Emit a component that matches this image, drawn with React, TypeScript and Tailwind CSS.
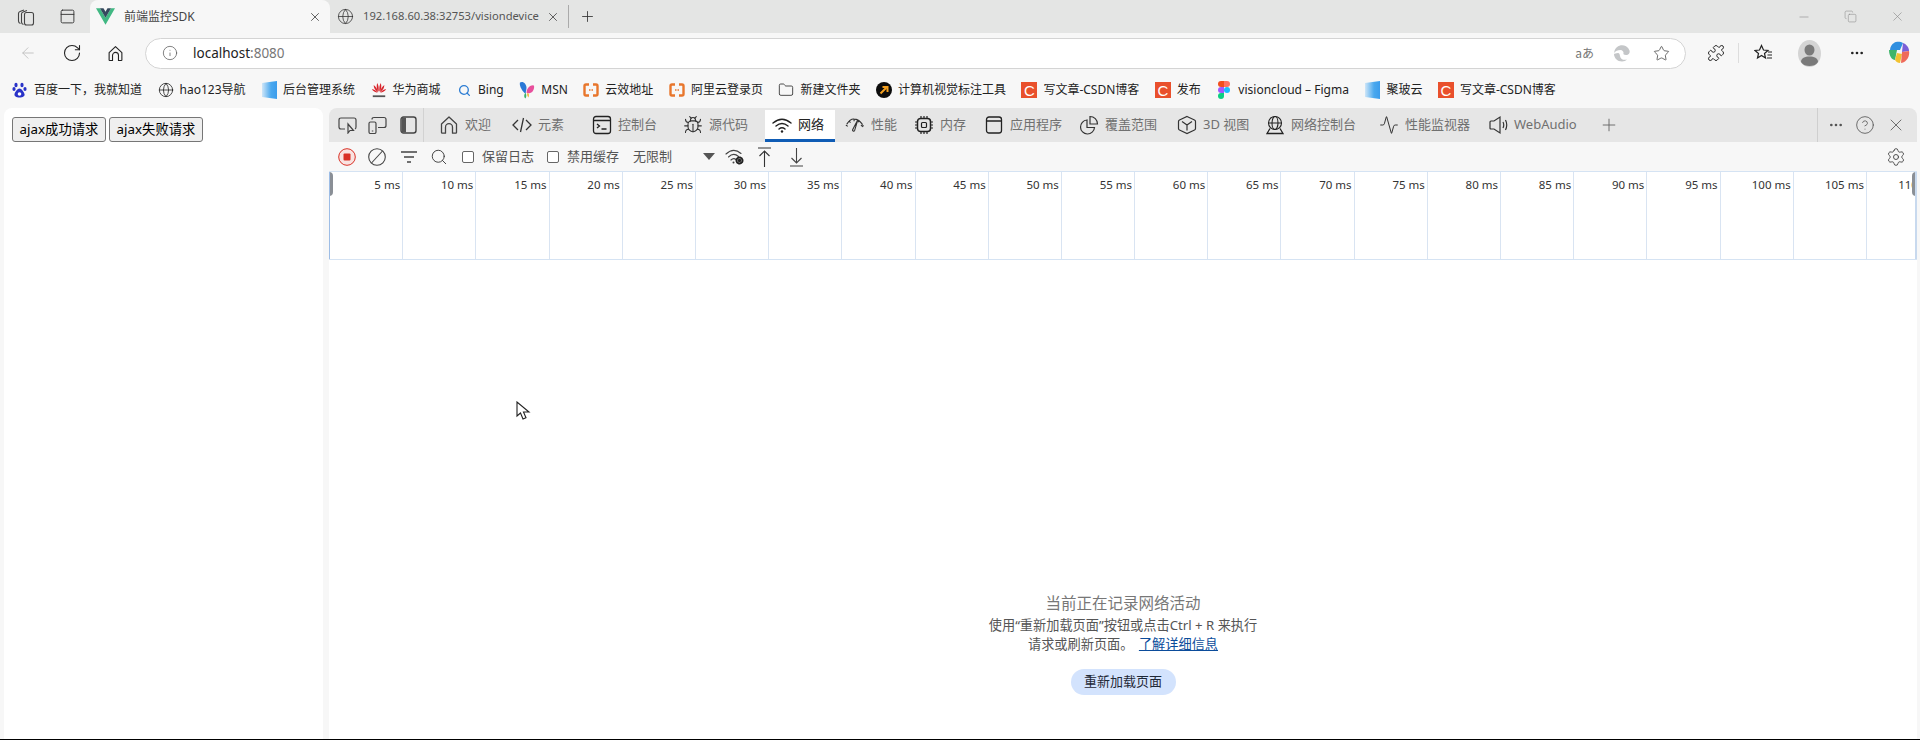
import React from "react"
import { ArrowLeft, RotateCw, Info, Star, Puzzle, X, Plus, Minus, Globe, Bug, Activity, Ellipsis, CircleHelp, Settings, Search, Folder, Copy, PanelTop } from "lucide-react"

const sans = "font-['Noto_Sans','Noto_Sans_CJK_SC',sans-serif]"

function VueLogo() {
  return (
    <svg width="19" height="17" viewBox="0 0 24 21">
      <path d="M0 0h5l7 12L19 0h5L12 21z" fill="#41b883" />
      <path d="M5 0h4.500L12 4.500 14.500 0H19l-7 12z" fill="#35495e" />
    </svg>
  )
}

function StackedTabs() {
  return (
    <svg width="18" height="18" viewBox="0 0 18 18" fill="none" stroke="#444" strokeWidth="1.100">
      <path d="M3.500 15.500Q1.500 15 1.500 13V5.500q0-1.500 1.500-2L7 2" />
      <path d="M6.500 16.500Q4.500 16 4.500 14V6q0-1.500 1.500-2l4-1.500" />
      <rect x="7.500" y="4.500" width="9" height="12.500" rx="2" />
    </svg>
  )
}

function BrowserHome({ size = 17 }: { size?: number }) {
  return (
    <svg width={size} height={size} viewBox="0 0 20 20" fill="none" stroke="currentColor" strokeWidth="1.300" strokeLinejoin="round">
      <path d="M10 2L2.500 9v8.500q0 .7.7.7h3.300v-6a3.500 3.500 0 017 0v6h3.300q.7 0 .7-.7V9z" />
    </svg>
  )
}

function BaiduIcon() {
  return (
    <svg width="16" height="16" viewBox="0 0 16 16" fill="#2932c8">
      <ellipse cx="4" cy="3" rx="1.600" ry="2.200" />
      <ellipse cx="10" cy="3" rx="1.600" ry="2.200" />
      <ellipse cx="2" cy="7" rx="1.600" ry="2" />
      <ellipse cx="13" cy="7" rx="1.600" ry="2" />
      <path d="M7.500 6.500C5.500 6.500 3 10 2.500 12c-.4 2 1.600 3.500 5 3.500s5.600-1.500 5-3.500c-.5-2-3-5.500-5-5.500z" />
      <circle cx="7.500" cy="12" r="1.800" fill="#fff" />
    </svg>
  )
}

function BlueSquare() {
  return (
    <svg width="15" height="18" viewBox="0 0 15 18">
      <defs>
        <linearGradient id="blueFade" x1="0" x2="1" y1="0" y2="0">
          <stop offset="0" stopColor="#cfe6f8" />
          <stop offset="0.6" stopColor="#4aa8ee" />
          <stop offset="1" stopColor="#3a9cec" />
        </linearGradient>
      </defs>
      <path d="M0 2l15-2v18L0 16z" fill="url(#blueFade)" />
    </svg>
  )
}

function HuaweiIcon() {
  return (
    <svg width="18" height="18" viewBox="0 0 18 18" fill="#d8232a">
      <path d="M8.500 11C6 8 6 4 7 1c1.500 2 2 6 1.500 10z" />
      <path d="M9.500 11c2.500-3 2.500-7 1.500-10-1.500 2-2 6-1.500 10z" />
      <path d="M8 11.500C5 10 3 7 3 3.500 5 5 7.500 8 8 11.500z" />
      <path d="M10 11.500c3-1.500 5-4.500 5-8-2 1.500-4.500 4.500-5 8z" />
      <path d="M7.500 12C5 12 2 10.500 1 8c2.500.5 5 2 6.500 4z" />
      <path d="M10.500 12c2.500 0 5.500-1.500 6.500-4-2.500.5-5 2-6.500 4z" />
      <rect x="2" y="15" width="14" height="2" fill="#555" />
    </svg>
  )
}

function BingIcon() {
  return <Search size={13} strokeWidth={2.4} className="text-[#2b7cd3]" />
}

function MsnIcon() {
  return (
    <svg width="17" height="20" viewBox="0 0 17 20">
      <path d="M1 2c3-2 7 1 7 6l-1 6C4 12 0 6 1 2z" fill="#2a78d6" />
      <path d="M8 13c0-3 2-8 7-8 2 0 1 5-1 7-2 1-4 2-6 1z" fill="#e84f9c" />
      <path d="M7 13c1 2 1 4 0 6-2-1-2-4 0-6z" fill="#38b36a" />
      <path d="M9 13c2 1 2 3 1 5-1-1-2-3-1-5z" fill="#f4b63f" />
    </svg>
  )
}

function AliIcon() {
  return (
    <svg width="16" height="14" viewBox="0 0 16 14" fill="none" stroke="#e8762c" strokeWidth="2.400">
      <path d="M6 1.500H3Q1.500 1.500 1.500 3v8q0 1.500 1.500 1.500h3" />
      <path d="M10 1.500h3q1.500 0 1.500 1.500v8q0 1.500-1.500 1.500h-3" />
      <path d="M6 7h4" strokeWidth="1.600" strokeDasharray="1.500 1" />
    </svg>
  )
}

function LabelIcon() {
  return (
    <svg width="16" height="16" viewBox="0 0 16 16">
      <circle cx="8" cy="8" r="8" fill="#0c0c0c" />
      <path d="M4.500 11.500L10 6M6.500 5h5v5" stroke="#f4a020" strokeWidth="2" fill="none" />
    </svg>
  )
}

function CsdnIcon() {
  return (
    <span className="flex h-4 w-4 items-center justify-center bg-[#e9502c] font-['Liberation_Sans',sans-serif] text-[15px] leading-none text-white">
      C
    </span>
  )
}

function FigmaIcon() {
  return (
    <svg width="12" height="18" viewBox="0 0 12 18">
      <path d="M6 0H3a3 3 0 000 6h3z" fill="#f24e1e" />
      <path d="M6 0h3a3 3 0 010 6H6z" fill="#ff7262" />
      <path d="M6 6H3a3 3 0 000 6h3z" fill="#a259ff" />
      <circle cx="9" cy="9" r="3" fill="#1abcfe" />
      <path d="M6 12H3a3 3 0 103 3z" fill="#0acf83" />
    </svg>
  )
}

function EdgeRefresh() {
  return (
    <svg width="18" height="18" viewBox="0 0 18 18" fill="#c4c6c8">
      <path d="M1 9a8 8 0 0115.500-2.500c.8 2.500-1 4.500-3.500 4.500-2 0-3-1-2.500-2 .3-1-1-3-3-3C4.500 6 2.500 7 1 9z" />
      <path d="M1 10c0 4 3.500 7.500 8 7.500 2 0 4-.8 5-2-3 1-6.500 0-7-3.500-.2-1.500-.5-3-2-3-2 0-3.500 1-4 1z" />
    </svg>
  )
}

function FavIcon() {
  return (
    <svg width="19" height="18" viewBox="0 0 19 18" fill="none" stroke="#222" strokeWidth="1.200">
      <path d="M7.500 1.500l2 4.500 4.500.5-3.500 3 1 4.500-4-2.500-4 2.500 1-4.500L1 6.500l4.500-.5z" />
      <path d="M14 8h4M13.500 11h4.500M13 14h5" />
    </svg>
  )
}

function Avatar() {
  return (
    <svg width="23" height="27" viewBox="0 0 23 27">
      <ellipse cx="11.500" cy="13.500" rx="11.500" ry="13.500" fill="#d4d4d4" />
      <ellipse cx="11.500" cy="10" rx="5" ry="5.500" fill="#7a7a7a" />
      <path d="M3 22c0-4 4-5.500 8.500-5.500S20 18 20 22c-2 3-5 4-8.500 4S5 25 3 22z" fill="#7a7a7a" />
    </svg>
  )
}

function CopilotIcon() {
  return (
    <svg width="24" height="24" viewBox="0 0 24 24">
      <path d="M7 2c3-2 7-1 9 0l-3 7H3c0-3 2-6 4-7z" fill="#2f8fe0" />
      <path d="M16 2c3 1 6 4 6 8l-7 1z" fill="#7a5fd8" />
      <path d="M2 9h8l-2 10c-3 0-6-4-6-10z" fill="#3fb56a" />
      <path d="M8 19l2-7 5 1-2 9c-2 0-4-1-5-3z" fill="#f2c230" />
      <path d="M15 11l7-1c1 5-2 11-8 12z" fill="#ef6a5a" />
    </svg>
  )
}

function CursorIcon() {
  return (
    <svg width="15" height="21" viewBox="0 0 15 21" fill="#fff" stroke="#222" strokeWidth="1.100">
      <path d="M1 1v14l3.500-3 2.500 6 3-1.300-2.500-5.700H13z" />
    </svg>
  )
}

function InspectIcon() {
  return (
    <svg width="19" height="18" viewBox="0 0 19 18" fill="none" stroke="#444" strokeWidth="1.200">
      <path d="M7 13H3q-2 0-2-2V4q0-2 2-2h13q2 0 2 2v7q0 1.500-1 2" />
      <path d="M10 8v9l2-2.500h3.500z" />
    </svg>
  )
}

function DeviceIcon() {
  return (
    <svg width="19" height="18" viewBox="0 0 19 18" fill="none" stroke="#444" strokeWidth="1.200">
      <rect x="1" y="6" width="7" height="11.500" rx="1.500" />
      <path d="M4 3.500q0-2 2-2h10q2 0 2 2v6q0 2-2 2h-6" />
      <path d="M3.800 15h1.500" />
    </svg>
  )
}

function DockIcon() {
  return (
    <svg width="17" height="18" viewBox="0 0 17 18">
      <rect x="1" y="1" width="15" height="16" rx="2.500" fill="none" stroke="#444" strokeWidth="1.400" />
      <path d="M3 1.500h3v15H3q-1.500 0-1.500-1.500V3Q1.500 1.500 3 1.500z" fill="#555" />
    </svg>
  )
}

function CodeIcon() {
  return (
    <svg width="20" height="20" viewBox="0 0 20 20" fill="none" stroke="#333" strokeWidth="1.300">
      <path d="M6 5l-5 5 5 5M14 5l5 5-5 5M11.500 3l-3 14" />
    </svg>
  )
}

function ConsoleIcon() {
  return (
    <svg width="20" height="20" viewBox="0 0 20 20" fill="none" stroke="#222" strokeWidth="1.300">
      <rect x="1.500" y="1.500" width="17" height="17" rx="2.500" />
      <path d="M1.500 5.500h17" />
      <path d="M5 9l2.500 2L5 13M9.500 14h5" />
    </svg>
  )
}

function WifiIcon() {
  return (
    <svg width="20" height="16" viewBox="0 0 20 16" fill="none" stroke="#222" strokeWidth="1.400" strokeLinecap="round">
      <path d="M1 6q9-7.500 18 0M4 9q6-5 12 0M7 12q3-2.500 6 0" />
      <circle cx="10" cy="14.500" r="1.200" fill="#222" stroke="none" />
    </svg>
  )
}

function GaugeIcon() {
  return (
    <svg width="22" height="18" viewBox="0 0 22 18" fill="none" stroke="#333" strokeWidth="1.200">
      <path d="M1 9l2 1.500M4.500 4.500l1.500 2M10 2.500v2.500M15.500 4l-1 2M19.500 8.500L17.500 10M20.500 9.500L18.500 11" />
      <path d="M2 8q4-6 8-5.500 5 0 9 5.500" />
      <path d="M14 3.500L8.500 14q-.6 1.500.7 1.700 1 .2 1.500-1z" />
    </svg>
  )
}

function ChipIcon() {
  return (
    <svg width="20" height="20" viewBox="0 0 20 20" fill="none" stroke="#222" strokeWidth="1.200">
      <rect x="3.500" y="3.500" width="13" height="13" rx="3" strokeWidth="1.500" />
      <rect x="7.500" y="7.500" width="5" height="5" rx="1" />
      <path d="M7 1v2M10 1v2M13 1v2M7 17v2M10 17v2M13 17v2M1 7h2M1 10h2M1 13h2M17 7h2M17 10h2M17 13h2" />
    </svg>
  )
}

function AppIcon() {
  return (
    <svg width="18" height="20" viewBox="0 0 18 20" fill="none" stroke="#222" strokeWidth="1.300">
      <rect x="1.500" y="2" width="15" height="16" rx="2.500" />
      <path d="M1.500 6h15" />
    </svg>
  )
}

function PieIcon() {
  return (
    <svg width="20" height="20" viewBox="0 0 20 20" fill="none" stroke="#333" strokeWidth="1.200">
      <path d="M8 5a7 7 0 107.500 7.500H8z" />
      <path d="M11 1.500a7.500 7.500 0 017.500 7.500H11z" />
    </svg>
  )
}

function CubeIcon() {
  return (
    <svg width="20" height="20" viewBox="0 0 20 20" fill="none" stroke="#333" strokeWidth="1.200">
      <path d="M10 1.500l7.500 3.500q1 .5 1 1.500v7q0 1-1 1.500L10 18.500 2.500 15q-1-.5-1-1.500v-7q0-1 1-1.500z" />
      <path d="M5 6.500L10 10l5-3.500M10 10v5.500" />
    </svg>
  )
}

function NetConsoleIcon() {
  return (
    <svg width="20" height="20" viewBox="0 0 20 20" fill="none" stroke="#222" strokeWidth="1.100">
      <circle cx="10" cy="8" r="6.500" />
      <ellipse cx="10" cy="8" rx="3" ry="6.500" />
      <path d="M3.500 8h13" />
      <path d="M5 13.500l-3 5h16l-3-5" strokeWidth="1.300" />
    </svg>
  )
}

function AudioIcon() {
  return (
    <svg width="20" height="20" viewBox="0 0 20 20" fill="none" stroke="#333" strokeWidth="1.200">
      <path d="M2 7q0-1 1-1h3l6-4v16l-6-4H3q-1 0-1-1z" />
      <path d="M15 7q1.500 3 0 6M17.500 5q2.500 5 0 10" />
    </svg>
  )
}

function FilterIcon() {
  return (
    <svg width="16" height="14" viewBox="0 0 16 14" stroke="#444" strokeWidth="1.600">
      <path d="M0 2h16M3 7h10M6 12h4" />
    </svg>
  )
}

function RecordIcon() {
  return (
    <svg width="18" height="18" viewBox="0 0 18 18">
      <circle cx="9" cy="9" r="8.300" fill="#f9e3e1" stroke="#d93025" strokeWidth="1" />
      <rect x="5.500" y="5.500" width="7" height="7" rx="1" fill="#d93025" />
    </svg>
  )
}

function ClearIcon() {
  return (
    <svg width="18" height="18" viewBox="0 0 18 18" fill="none" stroke="#444" strokeWidth="1.100">
      <circle cx="9" cy="9" r="8.300" />
      <path d="M3.500 15L14.500 3" />
    </svg>
  )
}

function WifiGear() {
  return (
    <svg width="19" height="17" viewBox="0 0 19 17" fill="none" stroke="#444" strokeWidth="1.100" strokeLinecap="round">
      <path d="M1 6q7.500-7 15-.5M3.500 9q5-5 10-.5M6 12q2.500-2.500 5-.5" />
      <circle cx="8.500" cy="14.500" r="1" fill="#444" stroke="none" />
      <circle cx="14.500" cy="12.500" r="3" stroke="#222" strokeWidth="2" strokeDasharray="1.500 0.600" />
      <circle cx="14.500" cy="12.500" r="1.800" fill="#222" stroke="none" />
    </svg>
  )
}

function UpIcon() {
  return (
    <svg width="13" height="20" viewBox="0 0 13 20" fill="none" stroke="#333" strokeWidth="1.100">
      <path d="M0 1h13M6.500 4v16M1.500 9l5-5 5 5" />
    </svg>
  )
}

function DownIcon() {
  return (
    <svg width="13" height="20" viewBox="0 0 13 20" fill="none" stroke="#444" strokeWidth="1.100">
      <path d="M0 19h13M6.500 1v15M1.500 11l5 5 5-5" />
    </svg>
  )
}

const bookmarks: { icon: React.ReactNode; text: string }[] = [
  { icon: <BaiduIcon />, text: "百度一下，我就知道" },
  { icon: <Globe size={16} strokeWidth={1.2} className="text-[#222]" />, text: "hao123导航" },
  { icon: <BlueSquare />, text: "后台管理系统" },
  { icon: <HuaweiIcon />, text: "华为商城" },
  { icon: <BingIcon />, text: "Bing" },
  { icon: <MsnIcon />, text: "MSN" },
  { icon: <AliIcon />, text: "云效地址" },
  { icon: <AliIcon />, text: "阿里云登录页" },
  { icon: <Folder size={16} strokeWidth={1.2} className="text-[#222]" />, text: "新建文件夹" },
  { icon: <LabelIcon />, text: "计算机视觉标注工具" },
  { icon: <CsdnIcon />, text: "写文章-CSDN博客" },
  { icon: <CsdnIcon />, text: "发布" },
  { icon: <FigmaIcon />, text: "visioncloud – Figma" },
  { icon: <BlueSquare />, text: "聚玻云" },
  { icon: <CsdnIcon />, text: "写文章-CSDN博客" },
]

const devTabs: { icon: React.ReactNode; text: string; width: string; active?: boolean }[] = [
  { icon: <span className="text-[#444]"><BrowserHome size={20} /></span>, text: "欢迎", width: "w-[73px]" },
  { icon: <CodeIcon />, text: "元素", width: "w-[80px]" },
  { icon: <ConsoleIcon />, text: "控制台", width: "w-[91px]" },
  { icon: <Bug size={20} strokeWidth={1.3} className="text-[#333]" />, text: "源代码", width: "w-[92px]" },
  { icon: <WifiIcon />, text: "网络", width: "w-[70px]", active: true },
  { icon: <GaugeIcon />, text: "性能", width: "w-[69px]" },
  { icon: <ChipIcon />, text: "内存", width: "w-[70px]" },
  { icon: <AppIcon />, text: "应用程序", width: "w-[95px]" },
  { icon: <PieIcon />, text: "覆盖范围", width: "w-[98px]" },
  { icon: <CubeIcon />, text: "3D 视图", width: "w-[88px]" },
  { icon: <NetConsoleIcon />, text: "网络控制台", width: "w-[114px]" },
  { icon: <Activity size={20} strokeWidth={1.2} className="text-[#333]" />, text: "性能监视器", width: "w-[109px]" },
  { icon: <AudioIcon />, text: "WebAudio", width: "w-[121px]" },
]

const ticks = Array.from({ length: 22 }, (_, i) => (i + 1) * 5)

function TabStrip() {
  return (
    <div className="flex h-[33px] shrink-0 items-stretch bg-[#e4e5e4]">
      <div className="flex w-[90px] shrink-0 items-center pl-[17px] text-[#333]">
        <StackedTabs />
        <PanelTop size={17} strokeWidth={1.3} className="ml-[24px]" />
      </div>
      <div className="flex w-[240px] shrink-0 items-center rounded-t-lg bg-[#f7f7f7] pl-[6px] pr-[8px]">
        <VueLogo />
        <span className="ml-[9px] flex-1 text-[12px] text-[#444]">前端监控SDK</span>
        <X size={14} strokeWidth={1.3} className="text-[#333]" />
      </div>
      <div className="my-[5px] flex w-[239px] shrink-0 items-center border-r border-[#aaa] pl-[7px] pr-[7px]">
        <Globe size={17} strokeWidth={1.1} className="text-[#333]" />
        <span className="ml-[9px] w-[177px] whitespace-nowrap text-[11.200px] text-[#555]">192.168.60.38:32753/visiondevice</span>
        <X size={14} strokeWidth={1.3} className="ml-[6px] text-[#333]" />
      </div>
      <div className="flex items-center pl-[10px] text-[#333]">
        <Plus size={17} strokeWidth={1.2} />
      </div>
      <div className="ml-auto flex items-center gap-[33px] pr-[15px] text-[#888]">
        <Minus size={14} strokeWidth={1} />
        <Copy size={13} strokeWidth={1} />
        <X size={15} strokeWidth={1} />
      </div>
    </div>
  )
}

function AddressRow() {
  return (
    <div className="flex h-[41px] shrink-0 items-center bg-[#f7f7f7] pb-[1px]">
      <div className="flex w-[145px] shrink-0 items-center pl-[19px] text-[#222]">
        <ArrowLeft size={18} strokeWidth={1.1} className="text-[#bbb]" />
        <RotateCw size={20} strokeWidth={1.3} className="ml-[25px]" />
        <span className="ml-[25px]"><BrowserHome /></span>
      </div>
      <div className="flex h-[31px] w-[1541px] shrink-0 items-center rounded-full border border-[#d4d4d4] bg-white pl-[16px] pr-[15px]">
        <Info size={16} strokeWidth={1.1} className="text-[#555]" />
        <span className="ml-[15px] text-[13.500px] text-[#222]">
          localhost<span className="text-[#777]">:8080</span>
        </span>
        <span className="ml-auto font-['Noto_Sans_CJK_JP',sans-serif] text-[12px] text-[#777]">aあ</span>
        <span className="ml-[19px]"><EdgeRefresh /></span>
        <Star size={17} strokeWidth={1.1} className="ml-[22px] text-[#444]" />
      </div>
      <div className="flex flex-1 items-center pl-[21px]">
        <Puzzle size={18} strokeWidth={1.3} className="text-[#222]" />
        <span className="ml-[13px] h-[20px] border-l border-[#ddd]" />
        <span className="ml-[15px]"><FavIcon /></span>
        <span className="ml-[25px]"><Avatar /></span>
        <Ellipsis size={16} strokeWidth={2} className="ml-[28px] text-[#222]" />
        <span className="ml-[22px]"><CopilotIcon /></span>
      </div>
    </div>
  )
}

function BookmarkBar() {
  return (
    <div className="flex h-[34px] shrink-0 items-center gap-[15.500px] bg-[#f7f7f7] pb-[2px] pl-[12px] text-[12px] text-[#222]">
      {bookmarks.map((b, i) => (
        <div key={i} className="flex items-center gap-[6px] whitespace-nowrap">
          <span className="flex h-[18px] w-[16px] items-center justify-center">{b.icon}</span>
          <span>{b.text}</span>
        </div>
      ))}
    </div>
  )
}

function DevtoolsTabs() {
  return (
    <div className="flex h-[34px] shrink-0 items-stretch bg-[#e6e6e6] text-[13px] text-[#707070]">
      <div className="mr-[5px] flex w-[95px] shrink-0 items-center border-r border-[#d2d2d2] pl-[9px]">
        <InspectIcon />
        <span className="ml-[11px]"><DeviceIcon /></span>
        <span className="ml-[13px]"><DockIcon /></span>
      </div>
      {devTabs.map((t) => (
        <div
          key={t.text}
          className={
            t.active
              ? `${t.width} mt-[2px] flex shrink-0 items-center gap-[6px] whitespace-nowrap border-b-[3px] border-[#0f5cb5] bg-white pl-[7px] text-[#222]`
              : `${t.width} flex shrink-0 items-center gap-[6px] whitespace-nowrap pl-[10px]`
          }
        >
          <span className="flex w-[20px] shrink-0 justify-center">{t.icon}</span>
          <span>{t.text}</span>
        </div>
      ))}
      <div className="flex items-center text-[#666]">
        <Plus size={20} strokeWidth={1.1} />
      </div>
      <div className="ml-auto flex w-[100px] items-center gap-[11px] border-l border-[#cfcfcf] pl-[10px] text-[#555]">
        <Ellipsis size={16} strokeWidth={2} />
        <CircleHelp size={20} strokeWidth={1} />
        <X size={20} strokeWidth={1} />
      </div>
    </div>
  )
}

function NetworkToolbar() {
  return (
    <div className="flex h-[29px] shrink-0 items-center bg-[#f7f7f7] pl-[9px] text-[13px] text-[#555]">
      <RecordIcon />
      <span className="ml-[12px]"><ClearIcon /></span>
      <span className="ml-[15px]"><FilterIcon /></span>
      <Search size={18} strokeWidth={1.2} className="ml-[13px] text-[#333]" />
      <span className="ml-[14px] h-[12px] w-[12px] rounded-[2px] border border-[#666] bg-white" />
      <span className="ml-[8px]">保留日志</span>
      <span className="ml-[13px] h-[12px] w-[12px] rounded-[2px] border border-[#666] bg-white" />
      <span className="ml-[8px]">禁用缓存</span>
      <span className="ml-[14px]">无限制</span>
      <span className="ml-[31px] h-0 w-0 border-x-[6px] border-t-[7px] border-x-transparent border-t-[#555]" />
      <span className="ml-[10px]"><WifiGear /></span>
      <span className="ml-[14px]"><UpIcon /></span>
      <span className="ml-[19px]"><DownIcon /></span>
      <Settings size={20} strokeWidth={1.1} className="ml-auto mr-[11px] text-[#444]" />
    </div>
  )
}

function Overview() {
  return (
    <div className="relative flex h-[89px] shrink-0 overflow-hidden border-y border-[#d5e3f3] bg-white pl-[1px]">
      {ticks.map((t) => (
        <div
          key={t}
          className="w-[73.200px] shrink-0 border-r border-[#d9e4f2] pr-[2px] pt-[5px] text-right text-[11.500px] leading-[16px] text-[#333]"
        >
          {t} ms
        </div>
      ))}
      <span className="absolute left-0 top-0 h-[24px] w-[4px] rounded-r-sm bg-[#8a8f96]" />
      <span className="absolute bottom-0 left-0 top-0 w-[1px] bg-[#9dbde6]" />
      <span className="absolute right-0 top-0 h-[24px] w-[5px] rounded-l-sm bg-[#8a8f96]" />
      <span className="absolute bottom-0 right-0 top-0 w-[2px] bg-[#c8d9ee]" />
    </div>
  )
}

function EmptyState() {
  return (
    <div className="flex flex-1 flex-col items-center justify-end bg-white pb-[44px] text-[13px]">
      <div className="text-[15.500px] leading-[22px] text-[#777]">当前正在记录网络活动</div>
      <div className="mt-[2px] text-center text-[13.200px] leading-[19px] text-[#555]">
        <div>使用“重新加载页面”按钮或点击Ctrl + R 来执行</div>
        <div>
          请求或刷新页面。 <span className="ml-[2px] text-[#0b4c9b] underline">了解详细信息</span>
        </div>
      </div>
      <button className="mt-[15px] flex h-[26px] w-[105px] items-center justify-center rounded-full bg-[#d3e3fd] text-[13px] text-[#1f2937]">
        重新加载页面
      </button>
    </div>
  )
}

export default function App() {
  return (
    <div className={`relative flex h-[740px] w-[1920px] flex-col overflow-hidden border-b border-black bg-[#f7f7f7] ${sans}`}>
      <TabStrip />
      <AddressRow />
      <BookmarkBar />
      <div className="flex min-h-0 flex-1 pl-[4px] pr-[3px]">
        <div className="flex w-[319px] shrink-0 items-start gap-[3px] rounded-t-lg bg-white pl-[8px] pt-[9px]">
          <button className="h-[25px] w-[94px] rounded-[3px] border border-[#767676] bg-[#efefef] text-[13.330px] text-black">ajax成功请求</button>
          <button className="h-[25px] w-[94px] rounded-[3px] border border-[#767676] bg-[#efefef] text-[13.330px] text-black">ajax失败请求</button>
        </div>
        <div className="ml-[6px] flex min-w-0 flex-1 flex-col overflow-hidden rounded-t-lg">
          <DevtoolsTabs />
          <NetworkToolbar />
          <Overview />
          <EmptyState />
        </div>
      </div>
      <span className="absolute left-[516px] top-[401px]"><CursorIcon /></span>
    </div>
  )
}
